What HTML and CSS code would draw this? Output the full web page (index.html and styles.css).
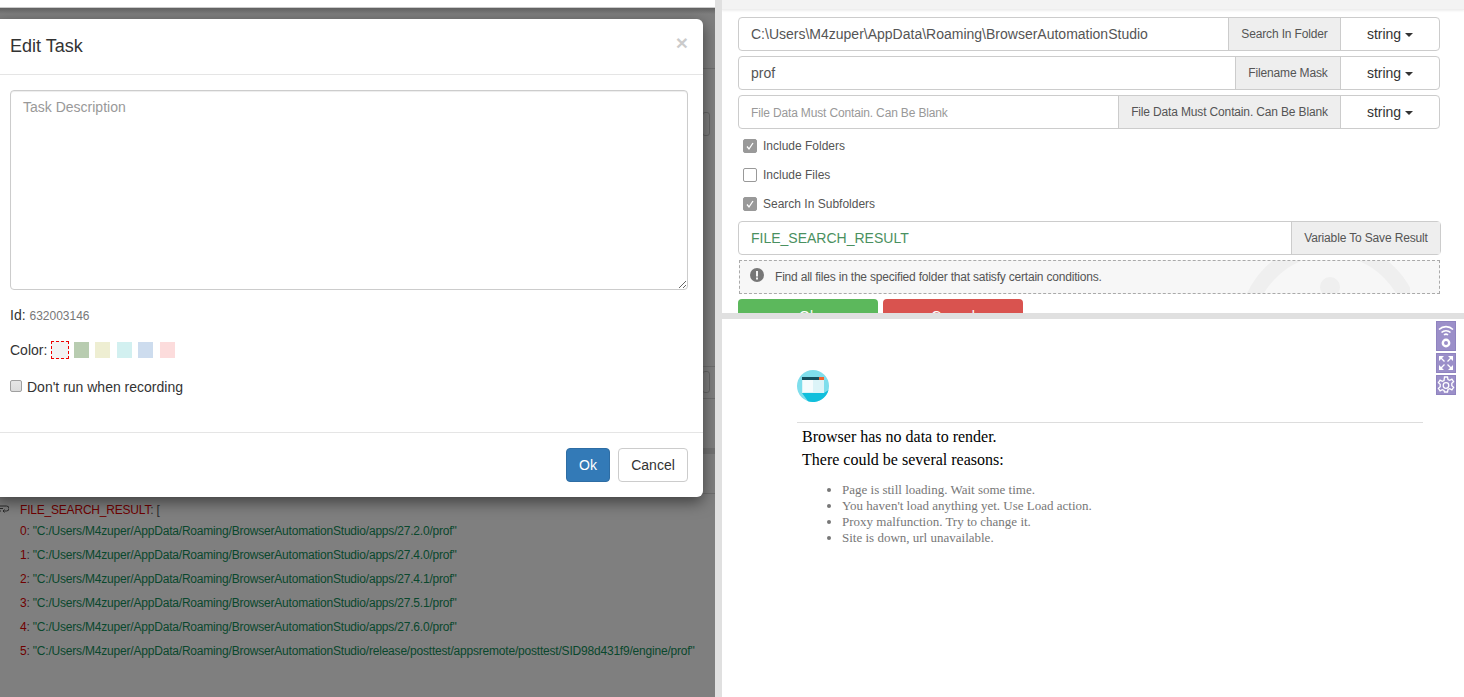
FILE: index.html
```html
<!DOCTYPE html>
<html lang="en">
<head>
<meta charset="utf-8">
<title>Edit Task</title>
<link rel="stylesheet" href="styles.css">
</head>
<body>
<div class="app">
  <section class="left">
    <div class="under">
      <div class="strip"></div>
      <div class="band band-a"></div>
      <div class="band band-b"><span class="stub stub-1"></span></div>
      <div class="band band-c"><span class="stub stub-2"></span></div>
      <div class="band band-d"></div>
      <div class="band band-e"></div>
      <div class="log">
        <div class="log-head">
          <svg class="wrap-icon" width="9" height="8" viewBox="0 0 9 8"><path d="M0 1h6.500a2.500 2.500 0 0 1 0 5H3M0 3.500h3M0 6h1M4.500 4.500 3 6l1.500 1.500" fill="none" stroke="#555" stroke-width="1"/></svg>
          <span class="key">FILE_SEARCH_RESULT</span><span class="punct">: [</span>
        </div>
        <div class="log-row"><span class="key">0</span><span class="punct">: </span><span class="str">"C:/Users/M4zuper/AppData/Roaming/BrowserAutomationStudio/apps/27.2.0/prof"</span></div>
        <div class="log-row"><span class="key">1</span><span class="punct">: </span><span class="str">"C:/Users/M4zuper/AppData/Roaming/BrowserAutomationStudio/apps/27.4.0/prof"</span></div>
        <div class="log-row"><span class="key">2</span><span class="punct">: </span><span class="str">"C:/Users/M4zuper/AppData/Roaming/BrowserAutomationStudio/apps/27.4.1/prof"</span></div>
        <div class="log-row"><span class="key">3</span><span class="punct">: </span><span class="str">"C:/Users/M4zuper/AppData/Roaming/BrowserAutomationStudio/apps/27.5.1/prof"</span></div>
        <div class="log-row"><span class="key">4</span><span class="punct">: </span><span class="str">"C:/Users/M4zuper/AppData/Roaming/BrowserAutomationStudio/apps/27.6.0/prof"</span></div>
        <div class="log-row"><span class="key">5</span><span class="punct">: </span><span class="str">"C:/Users/M4zuper/AppData/Roaming/BrowserAutomationStudio/release/posttest/appsremote/posttest/SID98d431f9/engine/prof"</span></div>
      </div>
    </div>
    <div class="backdrop"></div>
    <div class="modal">
      <header class="modal-head">
        <h4 class="modal-title">Edit Task</h4>
        <span class="close">×</span>
      </header>
      <div class="modal-body">
        <textarea class="task-area" placeholder="Task Description"></textarea>
        <div class="id-row">Id: <span class="id-value">632003146</span></div>
        <div class="color-row">
          <span class="color-label">Color:</span>
          <span class="swatch swatch-none"></span>
          <span class="swatch swatch-green"></span>
          <span class="swatch swatch-yellow"></span>
          <span class="swatch swatch-cyan"></span>
          <span class="swatch swatch-blue"></span>
          <span class="swatch swatch-red"></span>
        </div>
        <label class="record-row"><input class="record-check" type="checkbox"><span>Don't run when recording</span></label>
      </div>
      <footer class="modal-foot">
        <button class="btn btn-ok" type="button">Ok</button>
        <button class="btn btn-cancel" type="button">Cancel</button>
      </footer>
    </div>
  </section>

  <div class="vdivider"></div>

  <section class="right">
    <div class="form-pane">
      <div class="form-top"></div>
      <div class="form">
        <div class="group">
          <div class="field">C:\Users\M4zuper\AppData\Roaming\BrowserAutomationStudio</div>
          <div class="addon addon-folder">Search In Folder</div>
          <div class="type">string<span class="caret"></span></div>
        </div>
        <div class="group">
          <div class="field">prof</div>
          <div class="addon addon-mask">Filename Mask</div>
          <div class="type">string<span class="caret"></span></div>
        </div>
        <div class="group">
          <div class="field field-ph">File Data Must Contain. Can Be Blank</div>
          <div class="addon addon-data">File Data Must Contain. Can Be Blank</div>
          <div class="type">string<span class="caret"></span></div>
        </div>
        <div class="checks">
          <div class="check-row"><span class="box box-on"><svg width="14" height="14" viewBox="0 0 14 14"><path d="M4 7.500 6 10l4-6" fill="none" stroke="#fff" stroke-width="1.300"/></svg></span>Include Folders</div>
          <div class="check-row"><span class="box"></span>Include Files</div>
          <div class="check-row"><span class="box box-on"><svg width="14" height="14" viewBox="0 0 14 14"><path d="M4 7.500 6 10l4-6" fill="none" stroke="#fff" stroke-width="1.300"/></svg></span>Search In Subfolders</div>
        </div>
        <div class="group group-var">
          <div class="field field-var">FILE_SEARCH_RESULT</div>
          <div class="addon addon-var">Variable To Save Result</div>
        </div>
        <div class="info">
          <svg class="watermark" width="170" height="32" viewBox="0 0 170 32"><circle cx="90" cy="71" r="84" fill="none" stroke="#efefef" stroke-width="15"/><circle cx="90" cy="26" r="10" fill="#efefef"/></svg>
          <svg class="info-icon" width="14" height="14" viewBox="0 0 14 14"><circle cx="7" cy="7" r="7" fill="#777"/><rect x="6" y="3" width="2" height="5.500" fill="#f5f5f5"/><rect x="6" y="9.500" width="2" height="2" fill="#f5f5f5"/></svg>
          <span class="info-text">Find all files in the specified folder that satisfy certain conditions.</span>
        </div>
        <div class="actions">
          <button class="act act-ok" type="button">Ok</button>
          <button class="act act-cancel" type="button">Cancel</button>
        </div>
      </div>
    </div>
    <div class="hdivider"></div>
    <div class="browser">
      <div class="tools">
        <span class="tool tool-tall"><svg width="20" height="30" viewBox="0 0 20 30"><path d="M3 8.500a10 10 0 0 1 14 0M5.500 11.500a6.500 6.500 0 0 1 9 0M8 14a3 3 0 0 1 4 0" fill="none" stroke="#fff" stroke-width="1.600"/><circle cx="10" cy="22" r="3.200" fill="none" stroke="#fff" stroke-width="2.400"/></svg></span>
        <span class="tool"><svg width="20" height="20" viewBox="0 0 20 20"><path d="M3 3h5L3 8zM17 3h-5l5 5zM3 17h5l-5-5zM17 17h-5l5-5z" fill="#fff"/><path d="M5 5l3.500 3.500M15 5l-3.500 3.500M5 15l3.500-3.500M15 15l-3.500-3.500" fill="none" stroke="#fff" stroke-width="1.300"/></svg></span>
        <span class="tool"><svg width="20" height="20" viewBox="0 0 20 20"><path d="M8.500 2h3l.5 2.500 1.700.8 2.200-1.200 1.700 2.600-1.800 1.700v2.200l1.800 1.700-1.700 2.600-2.200-1.200-1.700.8-.5 2.500h-3L8 15.500l-1.700-.8-2.200 1.200-1.700-2.600 1.800-1.700V9.400L2.400 7.700l1.700-2.600 2.200 1.200L8 5.500z" fill="none" stroke="#fff" stroke-width="1.300"/><circle cx="10" cy="10.500" r="2.800" fill="none" stroke="#fff" stroke-width="1.300"/></svg></span>
      </div>
      <div class="logo-row">
        <svg width="32" height="32" viewBox="0 0 32 32"><circle cx="16" cy="16" r="16" fill="#7fdeec"/><path d="M5 23H27L31.500 20A16 16 0 0 1 11 31.200Z" fill="#12bfdc"/><rect x="5" y="7" width="22" height="16" fill="#dcf4f8"/><rect x="6" y="10" width="10" height="12" fill="#f6fcfd"/><rect x="5" y="7" width="17" height="3" fill="#14505f"/><rect x="22" y="7" width="5" height="3" fill="#f0642f"/></svg>
      </div>
      <div class="rule"></div>
      <p class="msg msg-first">Browser has no data to render.</p>
      <p class="msg">There could be several reasons:</p>
      <ul class="reasons">
        <li>Page is still loading. Wait some time.</li>
        <li>You haven't load anything yet. Use Load action.</li>
        <li>Proxy malfunction. Try to change it.</li>
        <li>Site is down, url unavailable.</li>
      </ul>
    </div>
  </section>
</div>
</body>
</html>
```

FILE: styles.css
```css
* { box-sizing: border-box; }
html, body { margin: 0; padding: 0; height: 100%; overflow: hidden; }
body { font-family: "Liberation Sans", Arial, sans-serif; font-size: 14px; color: #333; background: #fff; }
.app { display: flex; width: 1464px; height: 697px; }

/* left pane */
.left { position: relative; width: 715px; height: 697px; overflow: hidden; background: #fff; }
.under { display: flex; flex-direction: column; height: 100%; }
.strip { height: 8px; border-bottom: 1px solid #ccc; flex: none; }
.band { flex: none; border-bottom: 1px solid #ddd; position: relative; }
.band-a { height: 61px; }
.band-b { height: 298px; }
.band-c { height: 32px; }
.band-d { height: 55px; border-bottom: 6px solid #e4e4e4; }
.band-e { height: 40px; }
.stub { position: absolute; right: 5px; width: 8px; border: 1px solid #ccc; border-radius: 3px; }
.stub-1 { bottom: 230px; height: 24px; }
.stub-2 { bottom: 5px; height: 22px; }
.log { padding: 8px 0 0 20px; font-size: 12px; letter-spacing: -.2px; }
.log-head { position: relative; height: 17px; line-height: 17px; }
.wrap-icon { position: absolute; left: -20px; top: 3px; }
.log-row { height: 24px; line-height: 24px; white-space: nowrap; }
.key { color: #e00000; }
.punct { color: #555; }
.str { color: #12905a; }
.backdrop { position: absolute; inset: 8px 0 0 0; background: linear-gradient(to bottom, rgba(0,0,0,.62), rgba(0,0,0,.5) 6px); }
.modal { position: absolute; left: -5px; top: 19px; width: 708px; height: 478px; display: flex; flex-direction: column; background: #fff; border-radius: 6px; box-shadow: 0 5px 15px rgba(0,0,0,.5); }
.modal-head { height: 56px; flex: none; padding: 16px 15px 0; border-bottom: 1px solid #e5e5e5; display: flex; justify-content: space-between; }
.modal-title { margin: 0; font-size: 18px; font-weight: 400; line-height: 22px; color: #333; }
.close { font-size: 21px; font-weight: 700; line-height: 15px; color: #000; opacity: .2; }
.modal-body { flex: 1; padding: 15px; display: flex; flex-direction: column; }
.task-area { display: block; width: 100%; height: 200px; flex: none; padding: 6px 12px; border: 1px solid #ccc; border-radius: 4px; box-shadow: inset 0 1px 1px rgba(0,0,0,.075); font: 14px/20px "Liberation Sans", Arial, sans-serif; color: #555; outline: none; }
.task-area::placeholder { color: #999; opacity: 1; }
.id-row { margin-top: 15px; height: 20px; line-height: 20px; }
.id-value { font-size: 12px; color: #777; }
.color-row { margin-top: 15px; height: 20px; display: flex; align-items: center; }
.color-label { margin-right: 4px; }
.swatch { width: 15px; height: 16px; margin-right: 6.5px; }
.swatch-none { width: 18px; height: 18px; margin-right: 5px; background: #f2f2f2; border: 1px dashed #e00; }
.swatch-green { background: #b8ccb0; margin-right: 6px; }
.swatch-yellow { background: #eeeed2; }
.swatch-cyan { background: #d2f0f0; }
.swatch-blue { background: #cddcee; }
.swatch-red { background: #fcdcdc; }
.record-row { margin-top: 17px; display: flex; align-items: center; height: 20px; }
.record-check { appearance: none; width: 12px; height: 12px; margin: 0 5px 3px 0; border: 1px solid #a0a0a0; border-radius: 2px; background: linear-gradient(#e6e6e6, #dcdcdc); }
.modal-foot { height: 65px; flex: none; padding: 15px; border-top: 1px solid #e5e5e5; display: flex; justify-content: flex-end; gap: 8px; }
.btn { height: 34px; padding: 6px 12px; font: 14px/20px "Liberation Sans", Arial, sans-serif; border-radius: 4px; border: 1px solid #ccc; background: #fff; color: #333; }
.btn-ok { width: 44px; background: #337ab7; border-color: #2e6da4; color: #fff; }
.btn-cancel { width: 70px; }

.vdivider { width: 7px; flex: none; background: #e0e0e0; }

/* right pane */
.right { width: 742px; flex: none; display: flex; flex-direction: column; }
.form-pane { height: 313px; flex: none; overflow: hidden; }
.form-top { height: 10px; background: #f3f3f3; border-bottom: 1px solid #eee; box-shadow: 0 1px 2px #eee; }
.form { padding: 7px 0 0 16px; width: 719px; font-size: 12px; }
.group { display: flex; height: 34px; margin-bottom: 5px; border: 1px solid #ccc; border-radius: 4px; width: 702px; }
.field { flex: 1; padding: 0 12px; font-size: 14px; line-height: 32px; color: #555; white-space: nowrap; }
.field-ph { font-size: 12px; color: #999; letter-spacing: -.15px; line-height: 34px; }
.addon { flex: none; background: #eee; border-left: 1px solid #ccc; text-align: center; line-height: 32px; color: #555; white-space: nowrap; letter-spacing: -.15px; }
.addon-folder { width: 112px; }
.addon-mask { width: 105px; }
.addon-data { width: 222px; }
.addon-var { width: 149px; }
.type { flex: none; width: 99px; border-left: 1px solid #ccc; text-align: center; font-size: 14px; line-height: 32px; color: #333; }
.caret { display: inline-block; margin-left: 4px; vertical-align: middle; border-top: 4px solid #333; border-left: 4px solid transparent; border-right: 4px solid transparent; }
.checks { display: flex; flex-direction: column; margin: -3px 0 0 5px; }
.check-row { height: 29px; display: flex; align-items: center; gap: 6px; color: #555; }
.box { width: 14px; height: 14px; border: 1px solid #999; border-radius: 2px; background: #fff; display: block; flex: none; }
.box-on { background: #999; }
.box svg { display: block; margin: -1px; }
.group-var { margin-top: 3px; width: 703px; margin-bottom: 5px; }
.field-var { color: #4a9060; }
.info { position: relative; overflow: hidden; width: 701px; height: 34px; margin-left: 1px; margin-bottom: 5px; padding-left: 35px; background: #f7f7f7; border: 1px dashed #aaa; line-height: 32px; color: #555; font-size: 12px; letter-spacing: -.2px; }
.info-icon { position: absolute; left: 10px; top: 7px; }
.info-text { position: relative; }
.watermark { position: absolute; left: 500px; top: 0; }
.actions { display: flex; gap: 5px; }
.act { width: 140px; height: 34px; border: 0; border-radius: 4px; color: #fff; font: 14px/20px "Liberation Sans", Arial, sans-serif; }
.act-ok { background: #5cb85c; }
.act-cancel { background: #d9534f; }
.hdivider { height: 6px; flex: none; background: #e0e0e0; }

.browser { position: relative; flex: 1; padding-left: 75px; font-family: "Liberation Serif", "Times New Roman", serif; color: #000; }
.tools { position: absolute; left: 714px; top: 2px; display: flex; flex-direction: column; gap: 2px; }
.tool { display: block; width: 20px; height: 20px; background: #9b8fc9; border: 1px solid #8f83bf; }
.tool-tall { height: 30px; }
.tool svg { display: block; margin: -1px; }
.logo-row { padding-top: 51px; height: 103px; }
.logo-row svg { display: block; }
.rule { width: 626px; height: 1px; background: #ddd; }
.msg { margin: 0 0 0 5px; font-size: 16px; line-height: 23px; }
.msg-first { margin-top: 2px; }
.reasons { margin: 11px 0 0 5px; padding: 0 0 0 40px; font-size: 13px; line-height: 16px; color: #777; }
```
